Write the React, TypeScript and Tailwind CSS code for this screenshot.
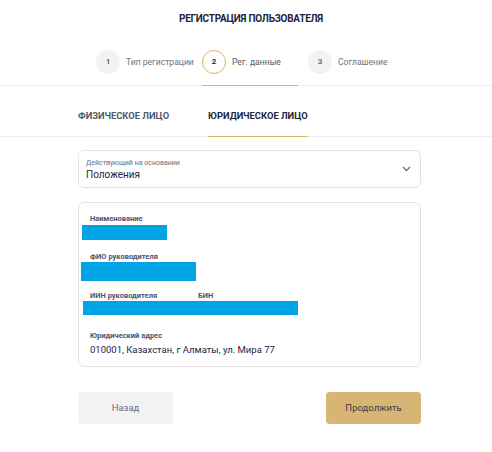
import React from 'react';

const steps = [
  { n: '1', label: 'Тип регистрации', active: false },
  { n: '2', label: 'Рег. данные', active: true },
  { n: '3', label: 'Соглашение', active: false },
];

const labelCls = 'text-[7.5px] font-bold leading-[10px] text-[#50536a]';

const App: React.FC = () => {
  return (
    <div className="min-h-[452px] w-[492px] bg-white font-['Roboto',sans-serif] text-[#22263d]">
      <div className="pt-[13px] pl-[10px] text-center text-[10px] font-bold uppercase leading-[12px] tracking-[-0.25px] text-[#22263d]">
        Регистрация пользователя
      </div>

      <div className="mt-[25px] border-b border-[#ececec]">
        <div className="ml-[96px] flex gap-[10px]">
          {steps.map((s) => (
            <div
              key={s.n}
              className={`flex w-[96px] items-center gap-[6px] pb-[11px] ${
                s.active ? 'border-b border-[#dcb46b] -mb-px' : ''
              }`}
            >
              <div
                className={`flex h-[24px] w-[24px] shrink-0 items-center justify-center rounded-full text-[8px] font-bold ${
                  s.active ? 'border border-[#dcb46b] bg-white text-[#22263d]' : 'bg-[#f2f2f3] text-[#6b6e80]'
                }`}
              >
                {s.n}
              </div>
              <span className={`whitespace-nowrap text-[8.6px] ${s.active ? 'text-[#55586b]' : 'text-[#707384]'}`}>
                {s.label}
              </span>
            </div>
          ))}
        </div>
      </div>

      <div className="border-b border-[#ececec]">
        <div className="ml-[78px] flex gap-[39px] pt-[24px]">
          <div className="pb-[14px] text-[9.4px] font-bold uppercase leading-[12px] text-[#55586b]">
            Физическое лицо
          </div>
          <div className="-mb-px border-b border-[#dcb46b] pb-[13px] text-[9.4px] font-bold uppercase leading-[12px] text-[#22263d]">
            Юридическое лицо
          </div>
        </div>
      </div>

      <div className="ml-[78px] w-[343px] pt-[13px]">
        <div className="flex h-[38px] items-center justify-between rounded-[6px] border border-[#e3e3e6] pl-[7px] pr-[9px]">
          <div className="flex flex-col">
            <span className="text-[7px] leading-[10px] text-[#6b6e80]">Действующий на основании</span>
            <span className="text-[10px] leading-[13px] text-[#22263d]">Положения</span>
          </div>
          <svg width="9" height="6" viewBox="0 0 9 6" fill="none" stroke="#6b6e80" strokeWidth="1.3">
            <path d="M1 1l3.5 3.5L8 1" />
          </svg>
        </div>

        <div className="mt-[14px] flex h-[165px] flex-col rounded-[6px] border border-[#e3e3e6] pt-[11px]">
          <div className={`pl-[11px] ${labelCls}`}>Наименование</div>
          <div className="ml-[3px] mt-[1px] h-[15px] w-[85px] bg-[#00a3e4]" />

          <div className={`mt-[12px] pl-[11px] ${labelCls}`}>ФИО руководителя</div>
          <div className="ml-[2px] h-[19px] w-[115px] bg-[#00a3e4]" />

          <div className={`mt-[10px] flex ${labelCls}`}>
            <span className="w-[119px] pl-[11px]">ИИН руководителя</span>
            <span>БИН</span>
          </div>
          <div className="ml-[4px] h-[14px] w-[215px] bg-[#00a3e4]" />

          <div className={`mt-[16px] pl-[11px] ${labelCls}`}>Юридический адрес</div>
          <div className="mt-[3px] pl-[11px] text-[9.5px] leading-[12px] text-[#22263d]">
            010001, Казахстан, г Алматы, ул. Мира 77
          </div>
        </div>

        <div className="mt-[25px] flex justify-between">
          <button className="h-[32px] w-[95px] rounded-[4px] bg-[#f3f3f4] text-[9.5px] text-[#6b6e80]">Назад</button>
          <button className="h-[32px] w-[95px] rounded-[4px] bg-[#d8b574] text-[9.5px] text-[#3a3c4a]">Продолжить</button>
        </div>
      </div>
    </div>
  );
};

export default App;
